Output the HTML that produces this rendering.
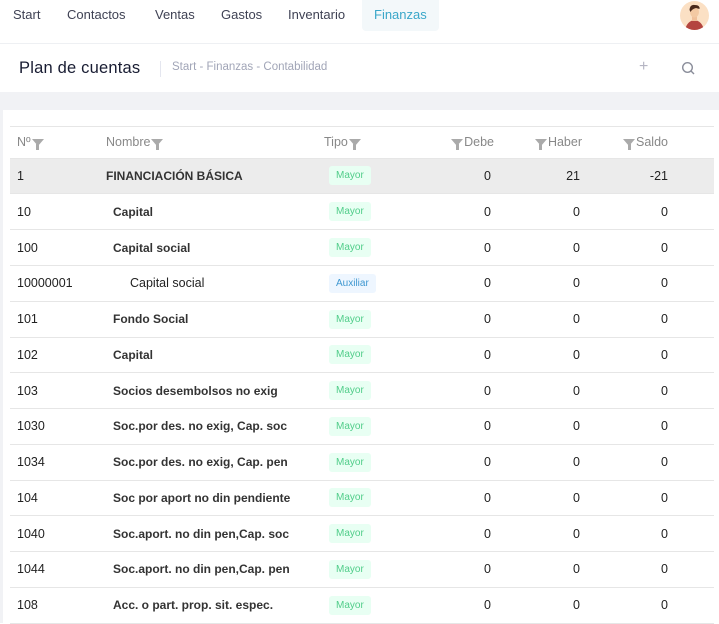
<!DOCTYPE html>
<html><head><meta charset="utf-8"><style>
*{margin:0;padding:0;box-sizing:border-box}
body{width:719px;height:623px;overflow:hidden;background:#fff;font-family:"Liberation Sans",sans-serif;position:relative}
.nav{position:absolute;top:0;left:0;width:719px;height:44px;border-bottom:1px solid #eef0f3}
.nav span{position:absolute;top:7px;font-size:13px;color:#3f4254}
.nav .act{background:#f3f8fa;color:#3aa7c9;top:0;height:31px;padding:7px 12px 0;border-radius:0 0 4px 4px}
.av{position:absolute;left:680px;top:1px;width:29px;height:29px;border-radius:50%;background:#fbe0c4;overflow:hidden}
.hdr{position:absolute;top:44px;left:0;width:719px;height:48px}
.title{position:absolute;left:19px;top:15px;font-size:16.5px;color:#181c32;letter-spacing:0.2px}
.sep{position:absolute;left:160px;top:17px;width:1px;height:16px;background:#e4e6ef}
.bc{position:absolute;left:172px;top:17px;font-size:11.5px;color:#a1a5b7}
.gray{position:absolute;top:92px;left:0;width:719px;height:531px;background:#f1f2f5}
.card{position:absolute;top:110px;left:3px;width:716px;height:513px;background:#fff}
table{position:absolute;top:126px;left:10px;width:704px;border-collapse:collapse;font-size:12.5px;color:#222;table-layout:fixed}
td,th{height:35.75px;border-bottom:1px solid #e6e6e6;padding:0;white-space:nowrap}
th{height:31.5px;font-weight:normal;color:#888;text-align:left;border-top:1px solid #e6e6e6}
.r{text-align:right}
.f{display:inline-block;width:0;height:0;border-left:6px solid transparent;border-right:6px solid transparent;border-top:7px solid #aaa;position:relative;vertical-align:middle;margin:0 1px}
.f:after{content:"";position:absolute;left:-1.5px;top:-2px;width:3px;height:6px;background:#aaa}
.b{display:inline-block;font-size:10px;padding:4px 7px;border-radius:3px;font-weight:normal}
.m{background:#e8fff3;color:#50cd89}
.a{background:#eef6ff;color:#3e97d0}
tr.g td{background:#ececec}
.bo td{font-weight:bold;color:#333;font-size:12px}
.bo td.n{font-weight:normal;color:#222;font-size:12.5px}
.d{padding-right:37px}.h{padding-right:38px}.s{padding-right:46px}
</style></head><body>
<div class="nav">
<span style="left:13px">Start</span>
<span style="left:67px">Contactos</span>
<span style="left:155px">Ventas</span>
<span style="left:221px">Gastos</span>
<span style="left:288px">Inventario</span>
<span class="act" style="left:362px">Finanzas</span>
<div class="av"><svg width="29" height="29" viewBox="0 0 29 29"><path d="M5 29 Q7 20 14.5 19 Q22 20 24 29Z" fill="#b4453f"/><rect x="12" y="14" width="5" height="6" fill="#f0c09a"/><ellipse cx="14.5" cy="11" rx="4.5" ry="5.5" fill="#f3c9a3"/><path d="M9.5 9 Q10 3 15 4 Q20 4 19.5 8 L16 7 Q12 8 10.5 11Z" fill="#4a2a1c"/></svg></div>
</div>
<div class="hdr">
<div class="title">Plan de cuentas</div><div class="sep"></div>
<div class="bc">Start - Finanzas - Contabilidad</div>
<div style="position:absolute;left:639px;top:14px;font-size:16px;color:#b5b5c3">+</div>
<svg style="position:absolute;left:681px;top:17px" width="14" height="14"><circle cx="6.5" cy="6.5" r="4.8" fill="none" stroke="#8a8d9a" stroke-width="1.4"/><line x1="10" y1="10" x2="13" y2="13" stroke="#8a8d9a" stroke-width="1.4"/></svg>
</div>
<div class="gray"></div>
<div class="card"></div>
<table>
<colgroup><col style="width:96px"><col style="width:218px"><col style="width:112px"><col style="width:92px"><col style="width:90px"><col style="width:96px"></colgroup>
<tr><th style="padding-left:7px">Nº<span class="f"></span></th><th>Nombre<span class="f"></span></th><th>Tipo<span class="f"></span></th><th class="r" style="padding-right:34px"><span class="f"></span>Debe</th><th class="r" style="padding-right:36px"><span class="f"></span>Haber</th><th class="r" style="padding-right:46px"><span class="f"></span>Saldo</th></tr>
<tr class="g"><td style="padding-left:7px">1</td><td style="font-weight:bold;font-size:12px;color:#333">FINANCIACIÓN BÁSICA</td><td><span class="b m" style="margin-left:5px">Mayor</span></td><td class="r d">0</td><td class="r h">21</td><td class="r s">-21</td></tr>
</table>
<table style="top:194px">
<colgroup><col style="width:103px"><col style="width:211px"><col style="width:112px"><col style="width:92px"><col style="width:90px"><col style="width:96px"></colgroup>
<tr class="bo"><td class="n" style="padding-left:7px">10</td><td>Capital</td><td><span class="b m" style="margin-left:5px">Mayor</span></td><td class="r n d">0</td><td class="r n h">0</td><td class="r n s">0</td></tr>
<tr class="bo"><td class="n" style="padding-left:7px">100</td><td>Capital social</td><td><span class="b m" style="margin-left:5px">Mayor</span></td><td class="r n d">0</td><td class="r n h">0</td><td class="r n s">0</td></tr>
<tr><td style="padding-left:7px">10000001</td><td style="padding-left:17px">Capital social</td><td><span class="b a" style="margin-left:5px">Auxiliar</span></td><td class="r d">0</td><td class="r h">0</td><td class="r s">0</td></tr>
<tr class="bo"><td class="n" style="padding-left:7px">101</td><td>Fondo Social</td><td><span class="b m" style="margin-left:5px">Mayor</span></td><td class="r n d">0</td><td class="r n h">0</td><td class="r n s">0</td></tr>
<tr class="bo"><td class="n" style="padding-left:7px">102</td><td>Capital</td><td><span class="b m" style="margin-left:5px">Mayor</span></td><td class="r n d">0</td><td class="r n h">0</td><td class="r n s">0</td></tr>
<tr class="bo"><td class="n" style="padding-left:7px">103</td><td>Socios desembolsos no exig</td><td><span class="b m" style="margin-left:5px">Mayor</span></td><td class="r n d">0</td><td class="r n h">0</td><td class="r n s">0</td></tr>
<tr class="bo"><td class="n" style="padding-left:7px">1030</td><td>Soc.por des. no exig, Cap. soc</td><td><span class="b m" style="margin-left:5px">Mayor</span></td><td class="r n d">0</td><td class="r n h">0</td><td class="r n s">0</td></tr>
<tr class="bo"><td class="n" style="padding-left:7px">1034</td><td>Soc.por des. no exig, Cap. pen</td><td><span class="b m" style="margin-left:5px">Mayor</span></td><td class="r n d">0</td><td class="r n h">0</td><td class="r n s">0</td></tr>
<tr class="bo"><td class="n" style="padding-left:7px">104</td><td>Soc por aport no din pendiente</td><td><span class="b m" style="margin-left:5px">Mayor</span></td><td class="r n d">0</td><td class="r n h">0</td><td class="r n s">0</td></tr>
<tr class="bo"><td class="n" style="padding-left:7px">1040</td><td>Soc.aport. no din pen,Cap. soc</td><td><span class="b m" style="margin-left:5px">Mayor</span></td><td class="r n d">0</td><td class="r n h">0</td><td class="r n s">0</td></tr>
<tr class="bo"><td class="n" style="padding-left:7px">1044</td><td>Soc.aport. no din pen,Cap. pen</td><td><span class="b m" style="margin-left:5px">Mayor</span></td><td class="r n d">0</td><td class="r n h">0</td><td class="r n s">0</td></tr>
<tr class="bo"><td class="n" style="padding-left:7px">108</td><td>Acc. o part. prop. sit. espec.</td><td><span class="b m" style="margin-left:5px">Mayor</span></td><td class="r n d">0</td><td class="r n h">0</td><td class="r n s">0</td></tr>
</table>
</body></html>
